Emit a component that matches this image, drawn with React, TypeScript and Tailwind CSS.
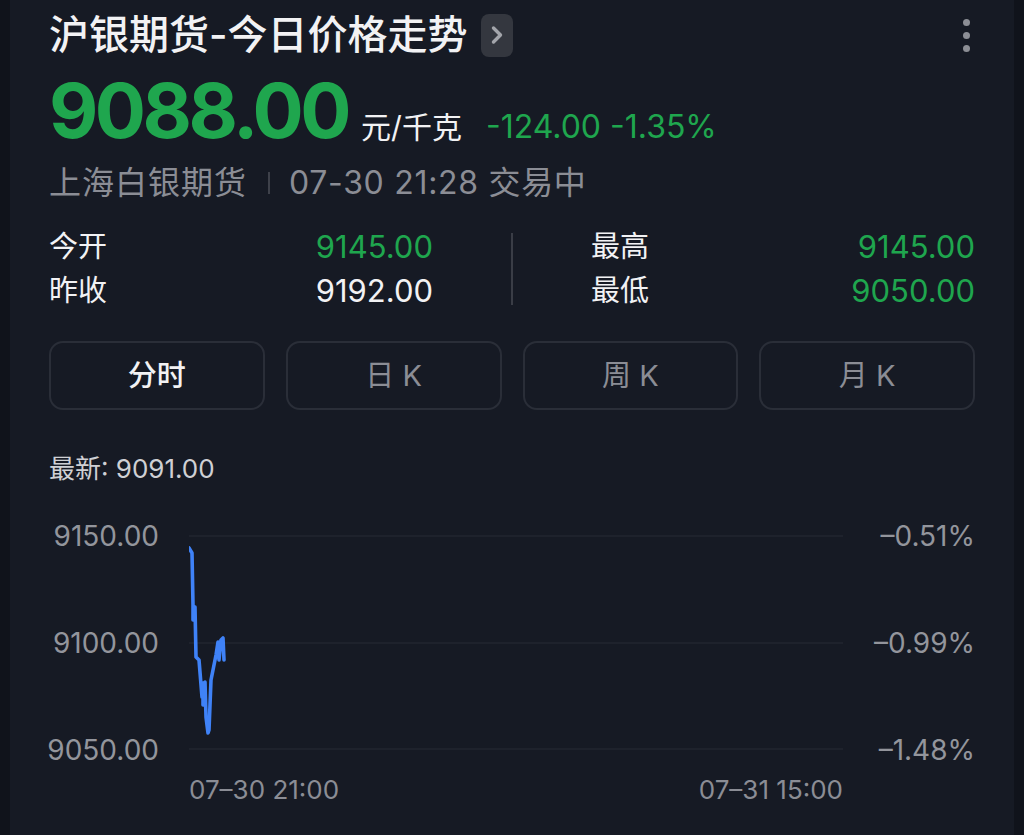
import React from "react";

const FONT = { fontFamily: '"Inter", "Noto Sans CJK SC", sans-serif' };

const pts: [number, number][] = [
  [189, 548], [192, 553], [193, 605], [193, 620], [195, 607], [196, 657], [199, 660],
  [202, 697], [203, 683], [203, 705], [205, 682], [206, 717], [208, 733], [209, 730],
  [211, 680], [213, 670], [216, 655], [218, 642], [219, 660], [221, 640], [223, 638], [224, 660],
];

export default function App() {
  // chart svg origin: x=189, y=523
  const path = pts.map(([x, y], i) => `${i ? "L" : "M"}${x - 189} ${y - 523}`).join(" ");
  return (
    <div className="w-full h-[835px] bg-[#10131b] flex overflow-hidden" style={FONT}>
      <div className="mx-[10px] flex-1 bg-[#161a24] px-[39px] pt-[13px] flex flex-col">
        {/* Title row */}
        <div className="h-[44px] flex items-center">
          <div className="text-[40px] leading-[44px] font-medium text-[#f2f2f4]">沪银期货-今日价格走势</div>
          <div className="ml-[13px] w-[32px] h-[43px] rounded-[8px] bg-[#34373f] flex items-center justify-center">
            <svg width="16" height="22" viewBox="0 0 16 22">
              <path d="M4.5 4 L11.5 11 L4.5 18" fill="none" stroke="#a3a5ab" strokeWidth="3.4" strokeLinecap="round" strokeLinejoin="round" />
            </svg>
          </div>
          <div className="ml-auto mr-[5px] flex flex-col gap-[6px] items-center">
            <span className="w-[7px] h-[7px] rounded-full bg-[#8c8e95]" />
            <span className="w-[7px] h-[7px] rounded-full bg-[#8c8e95]" />
            <span className="w-[7px] h-[7px] rounded-full bg-[#8c8e95]" />
          </div>
        </div>

        {/* Price row */}
        <div className="mt-[15px] flex items-baseline h-[76px]">
          <span className="text-[76px] leading-[76px] font-bold text-[#1fa64e] tracking-[-3.5px]">9088.00</span>
          <span className="ml-[13px] text-[30px] text-[#f2f2f4]">元/千克</span>
          <span className="ml-[24px] text-[32px] text-[#1fa64e]">-124.00 -1.35%</span>
        </div>

        {/* Subtitle */}
        <div className="mt-[17px] h-[36px] flex items-center text-[32px] leading-[36px] text-[#8b8d95]">
          <span className="tracking-[1px]">上海白银期货</span>
          <span className="ml-[21px] mr-[19px] w-[2px] h-[22px] bg-[#3e414a]" />
          <span className="tracking-[0.7px]">07-30 21:28 交易中</span>
        </div>

        {/* Stats */}
        <div className="mt-[24px] grid grid-cols-[1fr_2px_1fr] gap-x-[78px] text-[29px] leading-[44px]">
          <div className="flex flex-col">
            <div className="flex justify-between">
              <span className="text-[#f2f2f4]">今开</span>
              <span className="text-[31px] text-[#1fa64e]">9145.00</span>
            </div>
            <div className="flex justify-between">
              <span className="text-[#f2f2f4]">昨收</span>
              <span className="text-[31px] text-[#f2f2f4]">9192.00</span>
            </div>
          </div>
          <div className="my-[8px] bg-[#3a3d46]" />
          <div className="flex flex-col">
            <div className="flex justify-between">
              <span className="text-[#f2f2f4]">最高</span>
              <span className="text-[31px] text-[#1fa64e]">9145.00</span>
            </div>
            <div className="flex justify-between">
              <span className="text-[#f2f2f4]">最低</span>
              <span className="text-[31px] text-[#1fa64e]">9050.00</span>
            </div>
          </div>
        </div>

        {/* Tabs */}
        <div className="mt-[28px] grid grid-cols-4 gap-[21px]">
          <div className="h-[69px] rounded-[14px] border-2 border-[#2a2e38] flex items-center justify-center text-[29px] font-medium text-[#f2f2f4]">分时</div>
          <div className="h-[69px] rounded-[14px] border-2 border-[#2a2e38] flex items-center justify-center text-[29px] text-[#8b8d95]">日 K</div>
          <div className="h-[69px] rounded-[14px] border-2 border-[#2a2e38] flex items-center justify-center text-[29px] text-[#8b8d95]">周 K</div>
          <div className="h-[69px] rounded-[14px] border-2 border-[#2a2e38] flex items-center justify-center text-[29px] text-[#8b8d95]">月 K</div>
        </div>

        {/* Latest */}
        <div className="mt-[43px] text-[26px] leading-[32px] text-[#cfd0d4]">最新: 9091.00</div>

        {/* Chart */}
        <div className="mt-[38px] flex h-[240px]">
          <div className="w-[110px] flex flex-col justify-between items-end text-[28px] leading-[26px] text-[#93959c]">
            <span>9150.00</span>
            <span>9100.00</span>
            <span>9050.00</span>
          </div>
          <div className="ml-[30px] w-[654px] h-[240px]">
            <svg width="654" height="240" viewBox="0 0 654 240">
              <line x1="0" y1="13" x2="654" y2="13" stroke="#262a34" strokeWidth="1" />
              <line x1="0" y1="120" x2="654" y2="120" stroke="#262a34" strokeWidth="1" />
              <line x1="0" y1="226" x2="654" y2="226" stroke="#262a34" strokeWidth="1" />
              <path d={path} fill="none" stroke="#3f82f7" strokeWidth="3.6" strokeLinejoin="round" strokeLinecap="round" />
            </svg>
          </div>
          <div className="flex-1 flex flex-col justify-between items-end text-[28px] leading-[26px] text-[#93959c]">
            <span>–0.51%</span>
            <span>–0.99%</span>
            <span>–1.48%</span>
          </div>
        </div>

        {/* X labels */}
        <div className="mt-[11px] ml-[140px] w-[654px] flex justify-between text-[26px] leading-[32px] text-[#8b8d95]">
          <span>07–30 21:00</span>
          <span>07–31 15:00</span>
        </div>
      </div>
    </div>
  );
}
